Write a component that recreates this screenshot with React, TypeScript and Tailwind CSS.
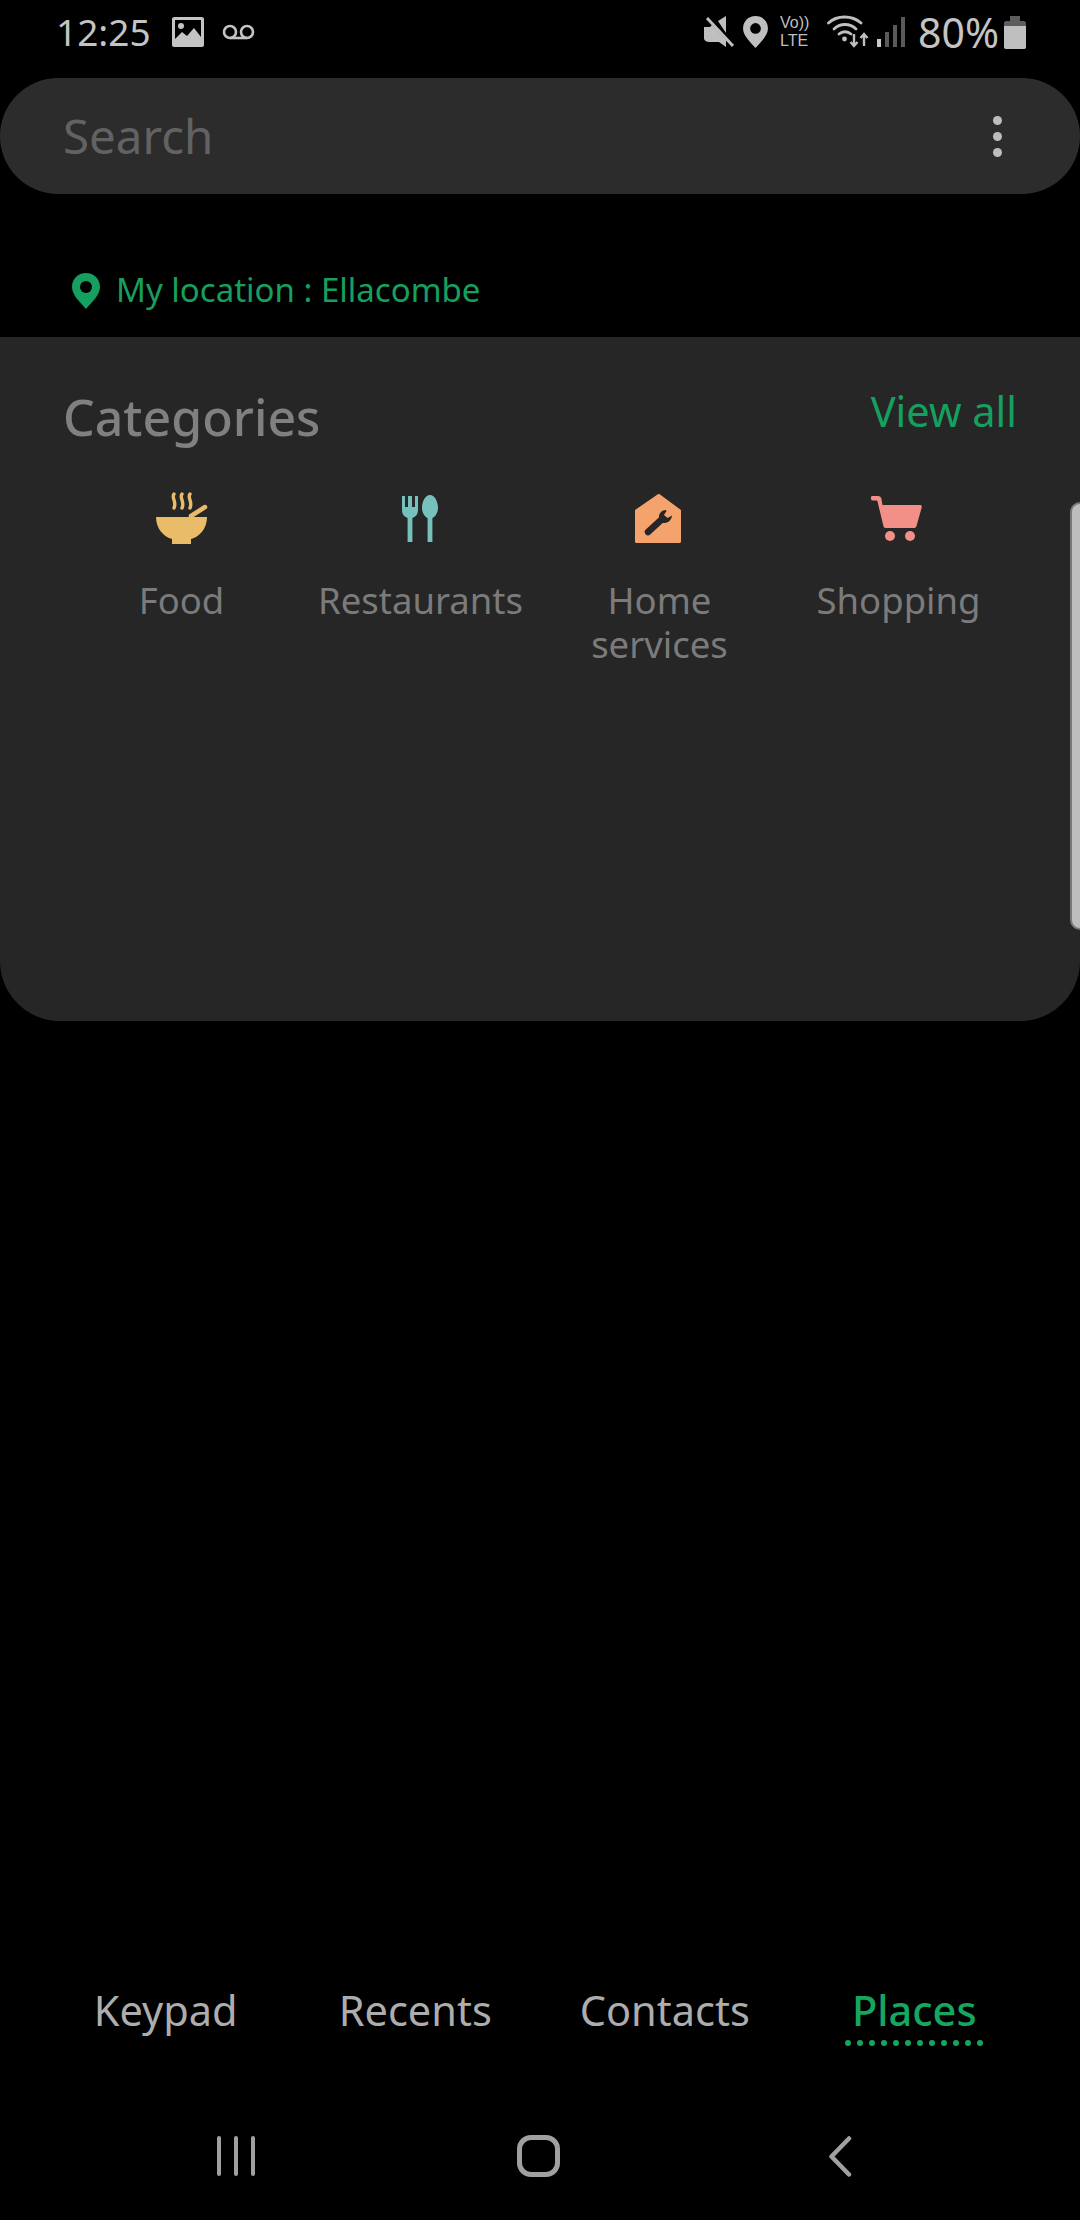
const categories = [
  { label: "Food", icon: <FoodIcon /> },
  { label: "Restaurants", icon: <RestaurantIcon /> },
  { label: "Home services", icon: <HomeIcon /> },
  { label: "Shopping", icon: <CartIcon /> },
];

const tabs = ["Keypad", "Recents", "Contacts", "Places"];

function FoodIcon() {
  return (
    <svg width="60" height="60" viewBox="1 0 60 60" fill="none">
      <path d="M5 27H56C56 39 48 47 40 49V54H21V49C13 47 5 39 5 27Z" fill="#e9bc69" />
      <path d="M40 26L54 17" stroke="#e9bc69" strokeWidth="4.5" strokeLinecap="round" />
      <path
        d="M23 4C20 8 26 11 23 18M31 4C28 8 34 11 31 18M39 4C36 8 42 11 39 18"
        stroke="#e9bc69"
        strokeWidth="3.4"
        strokeLinecap="round"
      />
    </svg>
  );
}

function RestaurantIcon() {
  return (
    <svg width="60" height="60" viewBox="1 0 60 60" fill="#77c1bd">
      <path d="M12 6H15V17H18V6H22V17H25V6H28V20C28 25 25 27 22.4 28V52H17.6V28C15 27 12 25 12 20Z" />
      <path d="M40 5C45 5 48 12 48 18C48 23 45 27 42.4 28V52H37.6V28C35 27 32 23 32 18C32 12 35 5 40 5Z" />
    </svg>
  );
}

function HomeIcon() {
  return (
    <svg width="60" height="60" viewBox="1 0 60 60" fill="none">
      <path
        d="M28.5 4.5C29.3 3.9 30.2 3.9 31 4.5L52 20V51.5C52 52.4 51.4 53 50.5 53H7.5C6.6 53 6 52.4 6 51.5V20Z"
        fill="#f4a36c"
      />
      <path d="M19 42L32 30" stroke="#262626" strokeWidth="6.5" strokeLinecap="round" />
      <path
        d="M37 20C33 20 29.5 23.5 30 28L34 33C38 33.5 42.5 31 43 25.5L38.5 28L35 25L37.5 21Z"
        fill="#262626"
      />
    </svg>
  );
}

function CartIcon() {
  return (
    <svg width="60" height="60" viewBox="3 0 60 60" fill="#f28f87">
      <path d="M6 6H12C14 6 15 7 15.5 9L16.5 15H54C55.5 15 56 16 55.7 17.5L50.5 36C50 37.5 49 38 48 38H20C18.5 38 17.8 37.4 17.4 36L11.5 11.5C11.3 10.8 11 10.5 10 10.5H6.5C4.5 10.5 4.5 6 6 6Z" />
      <circle cx="24" cy="46" r="5" />
      <circle cx="44" cy="46" r="5" />
    </svg>
  );
}

function MuteIcon() {
  return (
    <svg width="30" height="32" viewBox="0 0 30 32" fill="#bfbfbf">
      <path d="M0 11H6L8 9L22 24V31L15 26H6C3 26 0 25 0 22ZM14 5L22 0V17Z" />
      <path d="M3 2L29 30" stroke="#bfbfbf" strokeWidth="3" />
      <path d="M3 2L27 29" stroke="#000" strokeWidth="1.2" transform="translate(2.4 -2)" />
    </svg>
  );
}

function PinIcon({ color, width, height, hole }: { color: string; width: number; height: number; hole: string }) {
  return (
    <svg width={width} height={height} viewBox="0 0 28 36">
      <path d="M14 0C22 0 28 6 28 14C28 22 20 29 14 36C8 29 0 22 0 14C0 6 6 0 14 0Z" fill={color} />
      <circle cx="14" cy="14" r="6" fill={hole} />
    </svg>
  );
}

function WifiIcon() {
  return (
    <svg width="42" height="34" viewBox="0 0 42 34" fill="none" stroke="#bfbfbf" strokeLinecap="round">
      <path d="M1.5 8C10 0 25 0 34 8" strokeWidth="2.8" />
      <path d="M7 14C13 8 23 8 29 14" strokeWidth="2.8" />
      <path d="M12 19C15.5 16 20.5 16 24 19" strokeWidth="2.8" />
      <circle cx="17.5" cy="24" r="2.4" fill="#bfbfbf" stroke="none" />
      <path d="M27 19V31M23.5 27L27 31L30.5 27M37 31V19M33.5 23L37 19L40.5 23" strokeWidth="2.4" strokeLinecap="butt" />
    </svg>
  );
}

function StatusBar() {
  return (
    <div className="flex h-[78px] items-center pb-[14px] pl-[56px] pr-[54px] text-[#c4c4c4]">
      <span className="-mt-[2px] text-[37px] leading-none">12:25</span>
      <svg className="ml-[21px]" width="32" height="30" viewBox="0 0 32 30">
        <path fillRule="evenodd" d="M2 0H30C31 0 32 1 32 2V28C32 29 31 30 30 30H2C1 30 0 29 0 28V2C0 1 1 0 2 0ZM3 3V22L10 15L15 19L22 11L29 20V3Z" fill="#c4c4c4" />
        <circle cx="9" cy="9" r="3" fill="#c4c4c4" />
      </svg>
      <svg className="ml-[18px]" width="33" height="16" viewBox="0 0 33 16" fill="none" stroke="#c4c4c4" strokeWidth="2.6">
        <circle cx="8" cy="8" r="6" />
        <circle cx="25" cy="8" r="6" />
        <path d="M8 14H25" />
      </svg>
      <div className="ml-auto flex items-center">
        <MuteIcon />
        <div className="ml-[9px]">
          <PinIcon color="#bfbfbf" hole="#000" width={25} height={32} />
        </div>
        <div className="ml-[12px] flex w-[31px] flex-col font-['Liberation_Sans',sans-serif] text-[16px] leading-[18.5px] whitespace-nowrap text-[#bfbfbf]">
          <span>Vo))</span>
          <span>LTE</span>
        </div>
        <div className="ml-[16px]">
          <WifiIcon />
        </div>
        <svg className="ml-[8px]" width="28" height="30" viewBox="0 0 28 30">
          <rect x="0" y="22" width="4" height="8" fill="#c8c8c8" />
          <rect x="8" y="15" width="4" height="15" fill="#5a5a5a" />
          <rect x="16" y="8" width="4" height="22" fill="#5a5a5a" />
          <rect x="24" y="0" width="4" height="30" fill="#5a5a5a" />
        </svg>
        <span className="ml-[13px] text-[41px] leading-none">80%</span>
        <svg className="ml-[5px]" width="22" height="33" viewBox="0 0 22 33">
          <path d="M6 0H16V5H20C21 5 22 6 22 7V31C22 32 21 33 20 33H2C1 33 0 32 0 31V7C0 6 1 5 2 5H6Z" fill="#5d5d5d" />
          <path d="M0 10H22V31C22 32 21 33 20 33H2C1 33 0 32 0 31Z" fill="#bfbfbf" />
        </svg>
      </div>
    </div>
  );
}

function SearchBar() {
  return (
    <div className="flex h-[116px] items-center rounded-[58px] bg-[#2c2c2c] pl-[63px] pr-[78px]">
      <span className="text-[47.5px] leading-none text-[#626262]">Search</span>
      <div className="ml-auto flex flex-col gap-[7px]">
        <span className="size-[9px] rounded-full bg-[#bdbdbd]" />
        <span className="size-[9px] rounded-full bg-[#bdbdbd]" />
        <span className="size-[9px] rounded-full bg-[#bdbdbd]" />
      </div>
    </div>
  );
}

function CategoriesPanel() {
  return (
    <section className="relative h-[684px] rounded-b-[60px] bg-[#262626]">
      <div className="flex items-start justify-between pt-[50px] pl-[63px] pr-[63px]">
        <h2 className="text-[50px] leading-[60px] font-medium text-[#808080]">Categories</h2>
        <span className="-mt-[6px] text-[41.5px] leading-[60px] text-[#16a05f]">View all</span>
      </div>
      <div className="mx-[62px] mt-[43px] grid grid-cols-4">
        {categories.map((c) => (
          <div key={c.label} className="flex flex-col items-center">
            {c.icon}
            <span className="mt-[28px] w-[212px] text-center text-[36.5px] leading-[44px] text-[#7b7b7b]">{c.label}</span>
          </div>
        ))}
      </div>
      <div className="absolute top-[165px] right-0 h-[428px] w-[10px] rounded-l-[14px] border-y-2 border-l-2 border-[#777] bg-[#bdbdbd]" />
    </section>
  );
}

function BottomTabs() {
  return (
    <nav className="mx-[41px] grid h-[70px] grid-cols-4">
      {tabs.map((t) => {
        const active = t === "Places";
        return (
          <div key={t} className="relative flex justify-center">
            <span className={`text-[41.5px] leading-[56px] ${active ? "font-medium text-[#16a660]" : "text-[#adadad]"}`}>{t}</span>
            {active && (
              <div className="absolute top-[58px] left-1/2 flex -translate-x-1/2 gap-[6px]">
                {Array.from({ length: 12 }).map((_, i) => (
                  <span key={i} className="size-[6px] rounded-full bg-[#16a660]" />
                ))}
              </div>
            )}
          </div>
        );
      })}
    </nav>
  );
}

function NavBar() {
  return (
    <div className="mt-[78px] flex h-[90px] items-start">
      <div className="ml-[217px] mt-[6px] flex gap-[13px]">
        <span className="h-[40px] w-[4px] rounded-full bg-[#a0a0a0]" />
        <span className="h-[40px] w-[4px] rounded-full bg-[#a0a0a0]" />
        <span className="h-[40px] w-[4px] rounded-full bg-[#a0a0a0]" />
      </div>
      <div className="ml-[262px] mt-[5px] h-[42px] w-[43px] rounded-[14px] border-[5px] border-[#a0a0a0]" />
      <svg className="ml-[268px] mt-[6px]" width="24" height="41" viewBox="0 0 24 41" fill="none">
        <path d="M21 2.5L3.5 20.5L21 38.5" stroke="#a0a0a0" strokeWidth="4.5" strokeLinecap="round" strokeLinejoin="round" />
      </svg>
    </div>
  );
}

export default function App() {
  return (
    <div className="flex h-[2220px] w-[1080px] flex-col overflow-hidden bg-black font-['Noto_Sans',sans-serif]">
      <StatusBar />
      <SearchBar />
      <div className="flex h-[143px] items-end gap-[16px] pb-[23px] pl-[72px]">
        <div className="mb-[5px]">
          <PinIcon color="#16a05f" hole="#000" width={28} height={36} />
        </div>
        <span className="text-[33px] leading-[48px] text-[#16a05f]">My location : Ellacombe</span>
      </div>
      <CategoriesPanel />
      <div className="mt-auto">
        <BottomTabs />
        <NavBar />
      </div>
    </div>
  );
}
